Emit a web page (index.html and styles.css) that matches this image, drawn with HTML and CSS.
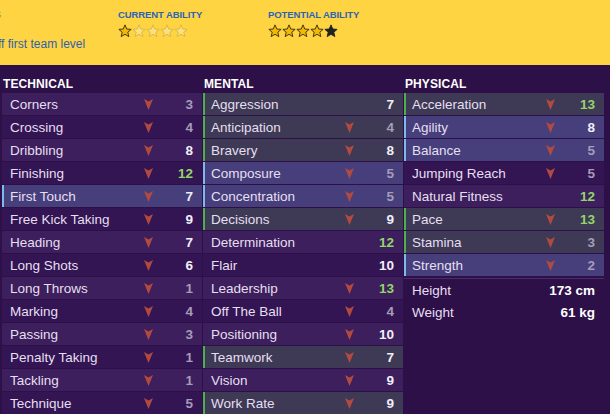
FILE: index.html
```html
<!DOCTYPE html>
<html>
<head>
<meta charset="utf-8">
<link rel="stylesheet" href="styles.css">
</head>
<body>
<header class="top">
  <div class="top-left">
    <span class="frag">s</span>
    <span class="sub">ff first team level</span>
  </div>
  <div class="ability">
    <div class="ab-label">CURRENT ABILITY</div>
    <div class="stars">
      <svg class="star on" viewBox="0 0 24 24"><polygon points="12,1.5 15,8.6 22.5,9.2 16.8,14.1 18.6,21.6 12,17.6 5.4,21.6 7.2,14.1 1.5,9.2 9,8.6"/></svg>
      <svg class="star off" viewBox="0 0 24 24"><polygon points="12,1.5 15,8.6 22.5,9.2 16.8,14.1 18.6,21.6 12,17.6 5.4,21.6 7.2,14.1 1.5,9.2 9,8.6"/></svg>
      <svg class="star off" viewBox="0 0 24 24"><polygon points="12,1.5 15,8.6 22.5,9.2 16.8,14.1 18.6,21.6 12,17.6 5.4,21.6 7.2,14.1 1.5,9.2 9,8.6"/></svg>
      <svg class="star off" viewBox="0 0 24 24"><polygon points="12,1.5 15,8.6 22.5,9.2 16.8,14.1 18.6,21.6 12,17.6 5.4,21.6 7.2,14.1 1.5,9.2 9,8.6"/></svg>
      <svg class="star off" viewBox="0 0 24 24"><polygon points="12,1.5 15,8.6 22.5,9.2 16.8,14.1 18.6,21.6 12,17.6 5.4,21.6 7.2,14.1 1.5,9.2 9,8.6"/></svg>
    </div>
  </div>
  <div class="ability">
    <div class="ab-label">POTENTIAL ABILITY</div>
    <div class="stars">
      <svg class="star on" viewBox="0 0 24 24"><polygon points="12,1.5 15,8.6 22.5,9.2 16.8,14.1 18.6,21.6 12,17.6 5.4,21.6 7.2,14.1 1.5,9.2 9,8.6"/></svg>
      <svg class="star on" viewBox="0 0 24 24"><polygon points="12,1.5 15,8.6 22.5,9.2 16.8,14.1 18.6,21.6 12,17.6 5.4,21.6 7.2,14.1 1.5,9.2 9,8.6"/></svg>
      <svg class="star on" viewBox="0 0 24 24"><polygon points="12,1.5 15,8.6 22.5,9.2 16.8,14.1 18.6,21.6 12,17.6 5.4,21.6 7.2,14.1 1.5,9.2 9,8.6"/></svg>
      <svg class="star on" viewBox="0 0 24 24"><polygon points="12,1.5 15,8.6 22.5,9.2 16.8,14.1 18.6,21.6 12,17.6 5.4,21.6 7.2,14.1 1.5,9.2 9,8.6"/></svg>
      <svg class="star dark" viewBox="0 0 24 24"><polygon points="12,1.5 15,8.6 22.5,9.2 16.8,14.1 18.6,21.6 12,17.6 5.4,21.6 7.2,14.1 1.5,9.2 9,8.6"/></svg>
    </div>
  </div>
</header>

<main class="attrs">
  <section class="col">
    <h2 class="col-title">TECHNICAL</h2>
    <ul class="rows">
      <li class="row"><span class="name">Corners</span><span class="arr"><svg viewBox="0 0 9 11"><polygon points="0,0 4.5,2.4 9,0 4.5,11"/></svg></span><span class="val low">3</span></li>
      <li class="row"><span class="name">Crossing</span><span class="arr"><svg viewBox="0 0 9 11"><polygon points="0,0 4.5,2.4 9,0 4.5,11"/></svg></span><span class="val low">4</span></li>
      <li class="row"><span class="name">Dribbling</span><span class="arr"><svg viewBox="0 0 9 11"><polygon points="0,0 4.5,2.4 9,0 4.5,11"/></svg></span><span class="val">8</span></li>
      <li class="row"><span class="name">Finishing</span><span class="arr"><svg viewBox="0 0 9 11"><polygon points="0,0 4.5,2.4 9,0 4.5,11"/></svg></span><span class="val high">12</span></li>
      <li class="row hl-blue"><span class="name">First Touch</span><span class="arr"><svg viewBox="0 0 9 11"><polygon points="0,0 4.5,2.4 9,0 4.5,11"/></svg></span><span class="val">7</span></li>
      <li class="row"><span class="name">Free Kick Taking</span><span class="arr"><svg viewBox="0 0 9 11"><polygon points="0,0 4.5,2.4 9,0 4.5,11"/></svg></span><span class="val">9</span></li>
      <li class="row"><span class="name">Heading</span><span class="arr"><svg viewBox="0 0 9 11"><polygon points="0,0 4.5,2.4 9,0 4.5,11"/></svg></span><span class="val">7</span></li>
      <li class="row"><span class="name">Long Shots</span><span class="arr"><svg viewBox="0 0 9 11"><polygon points="0,0 4.5,2.4 9,0 4.5,11"/></svg></span><span class="val">6</span></li>
      <li class="row"><span class="name">Long Throws</span><span class="arr"><svg viewBox="0 0 9 11"><polygon points="0,0 4.5,2.4 9,0 4.5,11"/></svg></span><span class="val low">1</span></li>
      <li class="row"><span class="name">Marking</span><span class="arr"><svg viewBox="0 0 9 11"><polygon points="0,0 4.5,2.4 9,0 4.5,11"/></svg></span><span class="val low">4</span></li>
      <li class="row"><span class="name">Passing</span><span class="arr"><svg viewBox="0 0 9 11"><polygon points="0,0 4.5,2.4 9,0 4.5,11"/></svg></span><span class="val low">3</span></li>
      <li class="row"><span class="name">Penalty Taking</span><span class="arr"><svg viewBox="0 0 9 11"><polygon points="0,0 4.5,2.4 9,0 4.5,11"/></svg></span><span class="val low">1</span></li>
      <li class="row"><span class="name">Tackling</span><span class="arr"><svg viewBox="0 0 9 11"><polygon points="0,0 4.5,2.4 9,0 4.5,11"/></svg></span><span class="val low">1</span></li>
      <li class="row"><span class="name">Technique</span><span class="arr"><svg viewBox="0 0 9 11"><polygon points="0,0 4.5,2.4 9,0 4.5,11"/></svg></span><span class="val low">5</span></li>
    </ul>
  </section>

  <section class="col">
    <h2 class="col-title">MENTAL</h2>
    <ul class="rows">
      <li class="row hl-green"><span class="name">Aggression</span><span class="arr"></span><span class="val">7</span></li>
      <li class="row hl-green"><span class="name">Anticipation</span><span class="arr"><svg viewBox="0 0 9 11"><polygon points="0,0 4.5,2.4 9,0 4.5,11"/></svg></span><span class="val low">4</span></li>
      <li class="row hl-green"><span class="name">Bravery</span><span class="arr"><svg viewBox="0 0 9 11"><polygon points="0,0 4.5,2.4 9,0 4.5,11"/></svg></span><span class="val">8</span></li>
      <li class="row hl-blue"><span class="name">Composure</span><span class="arr"><svg viewBox="0 0 9 11"><polygon points="0,0 4.5,2.4 9,0 4.5,11"/></svg></span><span class="val low">5</span></li>
      <li class="row hl-blue"><span class="name">Concentration</span><span class="arr"><svg viewBox="0 0 9 11"><polygon points="0,0 4.5,2.4 9,0 4.5,11"/></svg></span><span class="val low">5</span></li>
      <li class="row hl-green"><span class="name">Decisions</span><span class="arr"><svg viewBox="0 0 9 11"><polygon points="0,0 4.5,2.4 9,0 4.5,11"/></svg></span><span class="val">9</span></li>
      <li class="row"><span class="name">Determination</span><span class="arr"></span><span class="val high">12</span></li>
      <li class="row"><span class="name">Flair</span><span class="arr"></span><span class="val">10</span></li>
      <li class="row"><span class="name">Leadership</span><span class="arr"><svg viewBox="0 0 9 11"><polygon points="0,0 4.5,2.4 9,0 4.5,11"/></svg></span><span class="val high">13</span></li>
      <li class="row"><span class="name">Off The Ball</span><span class="arr"><svg viewBox="0 0 9 11"><polygon points="0,0 4.5,2.4 9,0 4.5,11"/></svg></span><span class="val low">4</span></li>
      <li class="row"><span class="name">Positioning</span><span class="arr"><svg viewBox="0 0 9 11"><polygon points="0,0 4.5,2.4 9,0 4.5,11"/></svg></span><span class="val">10</span></li>
      <li class="row hl-green"><span class="name">Teamwork</span><span class="arr"><svg viewBox="0 0 9 11"><polygon points="0,0 4.5,2.4 9,0 4.5,11"/></svg></span><span class="val">7</span></li>
      <li class="row"><span class="name">Vision</span><span class="arr"><svg viewBox="0 0 9 11"><polygon points="0,0 4.5,2.4 9,0 4.5,11"/></svg></span><span class="val">9</span></li>
      <li class="row hl-green"><span class="name">Work Rate</span><span class="arr"><svg viewBox="0 0 9 11"><polygon points="0,0 4.5,2.4 9,0 4.5,11"/></svg></span><span class="val">9</span></li>
    </ul>
  </section>

  <section class="col">
    <h2 class="col-title">PHYSICAL</h2>
    <ul class="rows">
      <li class="row hl-green"><span class="name">Acceleration</span><span class="arr"><svg viewBox="0 0 9 11"><polygon points="0,0 4.5,2.4 9,0 4.5,11"/></svg></span><span class="val high">13</span></li>
      <li class="row hl-blue"><span class="name">Agility</span><span class="arr"><svg viewBox="0 0 9 11"><polygon points="0,0 4.5,2.4 9,0 4.5,11"/></svg></span><span class="val">8</span></li>
      <li class="row hl-blue"><span class="name">Balance</span><span class="arr"><svg viewBox="0 0 9 11"><polygon points="0,0 4.5,2.4 9,0 4.5,11"/></svg></span><span class="val low">5</span></li>
      <li class="row"><span class="name">Jumping Reach</span><span class="arr"><svg viewBox="0 0 9 11"><polygon points="0,0 4.5,2.4 9,0 4.5,11"/></svg></span><span class="val low">5</span></li>
      <li class="row"><span class="name">Natural Fitness</span><span class="arr"></span><span class="val high">12</span></li>
      <li class="row hl-green"><span class="name">Pace</span><span class="arr"><svg viewBox="0 0 9 11"><polygon points="0,0 4.5,2.4 9,0 4.5,11"/></svg></span><span class="val high">13</span></li>
      <li class="row hl-green"><span class="name">Stamina</span><span class="arr"><svg viewBox="0 0 9 11"><polygon points="0,0 4.5,2.4 9,0 4.5,11"/></svg></span><span class="val low">3</span></li>
      <li class="row hl-blue"><span class="name">Strength</span><span class="arr"><svg viewBox="0 0 9 11"><polygon points="0,0 4.5,2.4 9,0 4.5,11"/></svg></span><span class="val low">2</span></li>
    </ul>
    <ul class="info">
      <li class="info-row"><span class="name">Height</span><span class="info-val">173 cm</span></li>
      <li class="info-row"><span class="name">Weight</span><span class="info-val">61 kg</span></li>
    </ul>
  </section>
</main>
</body>
</html>
```

FILE: styles.css
```css
* { box-sizing: border-box; }
html, body {
  margin: 0;
  padding: 0;
}
body {
  width: 610px;
  height: 414px;
  overflow: hidden;
  background: #2e1049;
  font-family: "Liberation Sans", Arial, sans-serif;
  color: #e6dff0;
}

/* ---------- Yellow header ---------- */
.top {
  height: 65px;
  background: #fed443;
  display: flex;
}
.top-left {
  width: 118px;
  display: flex;
  flex-direction: column;
  padding-top: 8px;
}
.frag {
  font-size: 12px;
  line-height: 12px;
  color: #8a8aa0;
  margin-left: -5px;
}
.sub {
  margin-top: 17px;
  margin-left: -2px;
  font-size: 12px;
  line-height: 14px;
  color: #2f62aa;
  white-space: nowrap;
}
.ability {
  width: 150px;
  padding-top: 9px;
}
.ab-label {
  font-size: 9.5px;
  line-height: 12px;
  font-weight: bold;
  color: #2c63b5;
  letter-spacing: -0.1px;
}
.stars {
  display: flex;
  margin-top: 3px;
}
.star {
  width: 14px;
  height: 14px;
  display: block;
}
.star polygon { stroke-width: 1.6; stroke-linejoin: round; }
.star.on polygon { fill: #f2b806; stroke: #3a2e10; }
.star.off polygon { fill: #fbe07c; stroke: #d8b548; }
.star.dark polygon { fill: #222; stroke: #222; }

/* ---------- Attribute columns ---------- */
.attrs {
  display: grid;
  grid-template-columns: 200px 200px 200px;
  column-gap: 1px;
  padding-left: 2px;
}
.col-title {
  margin: 0;
  height: 28px;
  padding: 12px 0 0 1px;
  font-size: 12px;
  line-height: 14px;
  font-weight: bold;
  color: #ffffff;
  letter-spacing: 0.1px;
}
.rows, .info {
  list-style: none;
  margin: 0;
  padding: 0;
}
.rows {
  display: flex;
  flex-direction: column;
  gap: 1px;
}
.row {
  height: 22px;
  display: grid;
  grid-template-columns: 1fr 10px 40px;
  align-items: center;
  padding: 0 9px 0 6px;
  border-left: 2px solid transparent;
  background: #331553;
  font-size: 13.5px;
}
.row:nth-child(odd) { background: #3c1f5c; }
.row.hl-green { background: #3e3a56; border-left-color: #4db04a; }
.row.hl-blue { background: #463f7c; border-left-color: #7dbaf0; }

.name {
  white-space: nowrap;
  color: #e6dff0;
}
.arr {
  display: flex;
  justify-content: center;
  align-items: center;
}
.arr svg {
  width: 9px;
  height: 11px;
  display: block;
}
.arr polygon { fill: #b34a40; }
.val {
  text-align: right;
  font-weight: bold;
  color: #f2eef7;
}
.val.low { color: #a79cb8; }
.val.high { color: #93d46a; }

.info {
  margin-top: 2px;
  border-top: 1px solid #4a2d67;
}
.info-row {
  height: 22px;
  display: flex;
  align-items: center;
  justify-content: space-between;
  padding: 0 9px 0 8px;
  font-size: 13.5px;
}
.info-val {
  font-weight: bold;
  color: #ffffff;
}
```
